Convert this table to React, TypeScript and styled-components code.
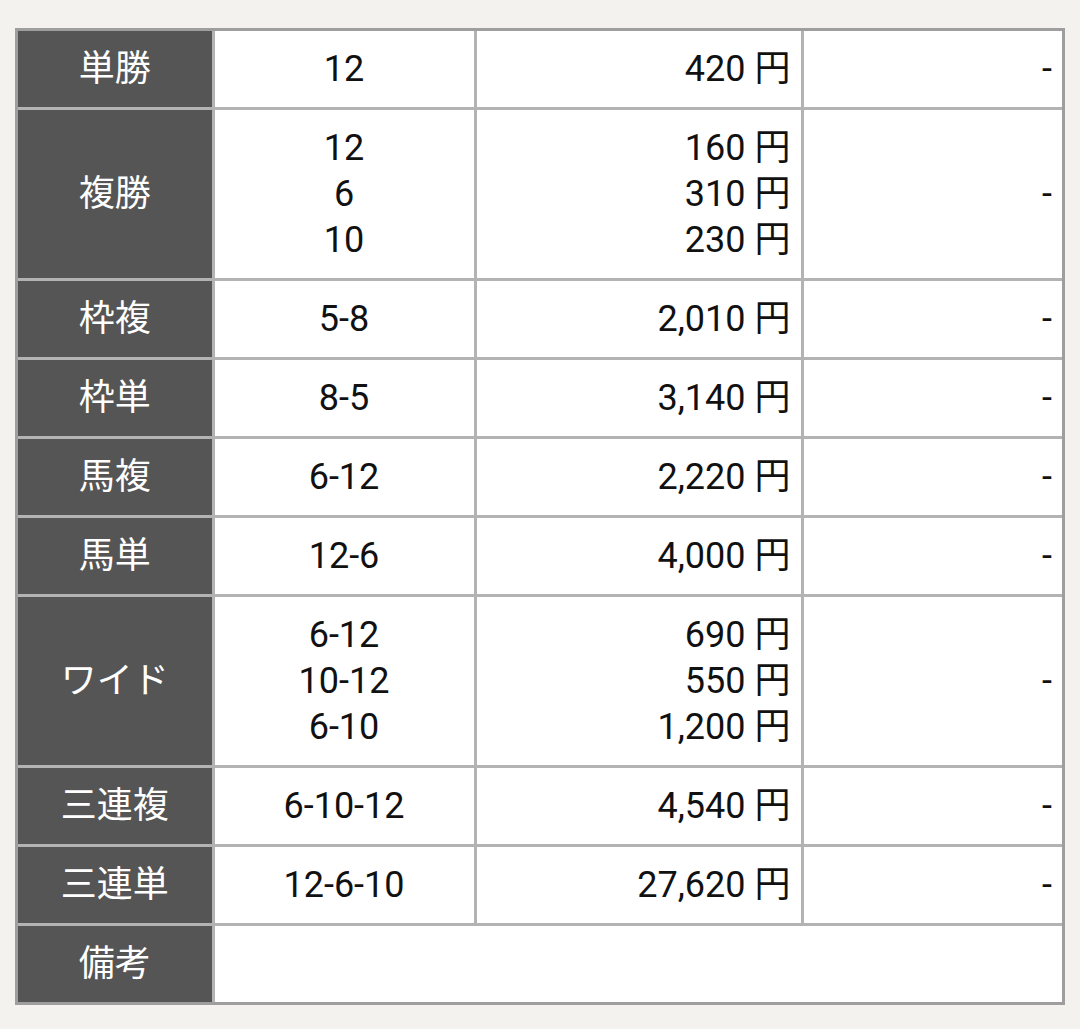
import React from "react";
import styled, { createGlobalStyle } from "styled-components";

const Global = createGlobalStyle`
  html, body { background: #f3f2ee; }
  body {
    margin: 0;
    padding: 28px 0 23px 15px;
    font-family: Roboto, "Noto Sans CJK JP", sans-serif;
  }
`;

const Frame = styled.div`
  width: 1044px;
  border: 3px solid #9e9e9e;
  background: #fff;
`;

const Table = styled.table`
  width: 1044px;
  table-layout: fixed;
  border-collapse: collapse;
  border-style: hidden;
  font-size: 36px;
  line-height: 46px;
`;

const Head = styled.th`
  background: #555555;
  color: #ffffff;
  font-weight: 400;
  text-align: center;
  padding: 15px 8px;
  border: 3px solid #b3b3b3;
  white-space: nowrap;
`;

const Cell = styled.td<{ $align: "center" | "right" }>`
  background: #fff;
  color: #111;
  text-align: ${(p) => p.$align};
  padding: ${(p) => (p.$align === "right" ? "15px 10px 15px 8px" : "15px 8px")};
  border: 3px solid #b3b3b3;
  vertical-align: middle;
  white-space: nowrap;
`;

const Line = styled.div``;

type Row = { label: string; combos: string[]; pays: string[] };

const rows: Row[] = [
  { label: "単勝", combos: ["12"], pays: ["420"] },
  { label: "複勝", combos: ["12", "6", "10"], pays: ["160", "310", "230"] },
  { label: "枠複", combos: ["5-8"], pays: ["2,010"] },
  { label: "枠単", combos: ["8-5"], pays: ["3,140"] },
  { label: "馬複", combos: ["6-12"], pays: ["2,220"] },
  { label: "馬単", combos: ["12-6"], pays: ["4,000"] },
  { label: "ワイド", combos: ["6-12", "10-12", "6-10"], pays: ["690", "550", "1,200"] },
  { label: "三連複", combos: ["6-10-12"], pays: ["4,540"] },
  { label: "三連単", combos: ["12-6-10"], pays: ["27,620"] },
];

export default function App() {
  return (
    <>
      <Global />
      <Frame>
        <Table>
          <colgroup>
            <col style={{ width: 195 }} />
            <col style={{ width: 262 }} />
            <col style={{ width: 327 }} />
            <col style={{ width: 260 }} />
          </colgroup>
          <tbody>
            {rows.map((r) => (
              <tr key={r.label}>
                <Head>{r.label}</Head>
                <Cell $align="center">
                  {r.combos.map((c) => (
                    <Line key={c}>{c}</Line>
                  ))}
                </Cell>
                <Cell $align="right">
                  {r.pays.map((p) => (
                    <Line key={p}>{p} 円</Line>
                  ))}
                </Cell>
                <Cell $align="right">-</Cell>
              </tr>
            ))}
            <tr>
              <Head>備考</Head>
              <Cell $align="center" colSpan={3}></Cell>
            </tr>
          </tbody>
        </Table>
      </Frame>
    </>
  );
}
